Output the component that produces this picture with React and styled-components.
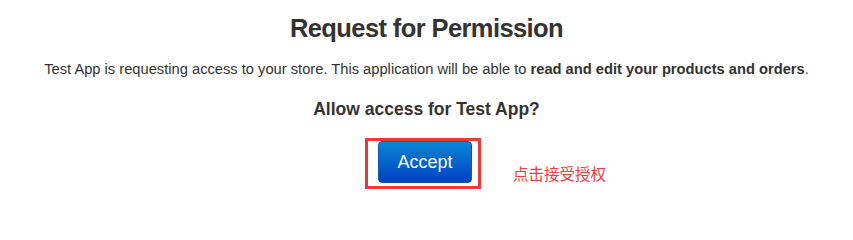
import styled, { createGlobalStyle } from 'styled-components';

const GlobalStyle = createGlobalStyle`
  html, body {
    margin: 0;
    padding: 0;
    background: #ffffff;
  }
  body {
    font-family: "Liberation Sans", Arial, sans-serif;
    color: #333333;
  }
`;

const Page = styled.div`
  display: flex;
  flex-direction: column;
  align-items: center;
  padding-top: 13px;
  text-align: center;
`;

const Title = styled.h1`
  margin: 0;
  font-size: 25.5px;
  line-height: 30px;
  letter-spacing: -0.6px;
  font-weight: bold;
  color: #333333;
`;

const Description = styled.p`
  margin: 16px 0 0;
  font-size: 14.7px;
  line-height: 20px;
  color: #333333;

  strong {
    font-weight: bold;
  }
`;

const Question = styled.h2`
  margin: 19px 0 0;
  font-size: 17.5px;
  line-height: 22px;
  font-weight: bold;
  color: #333333;
`;

// red highlight box drawn round the button (annotation)
const Highlight = styled.div`
  position: relative;
  display: flex;
  margin: 18px 7px 0 0;
  padding: 0 6px 3px 10px;
  border: 3px solid #ee3838;
`;

const AcceptButton = styled.button`
  width: 94px;
  height: 42px;
  padding: 0;
  border: 1px solid #0a57b4;
  border-radius: 4px;
  background: linear-gradient(#0b86d6, #0142c2);
  color: #ffffff;
  font-family: "Liberation Sans", Arial, sans-serif;
  font-size: 18px;
  cursor: pointer;
`;

const Note = styled.span`
  position: absolute;
  left: calc(100% + 35px);
  top: 22px;
  white-space: nowrap;
  font-family: "Noto Sans CJK SC", sans-serif;
  font-size: 15.5px;
  line-height: 20px;
  color: #f03c3c;
`;

export default function App() {
  return (
    <>
      <GlobalStyle />
      <Page>
        <Title>Request for Permission</Title>
        <Description>
          Test App is requesting access to your store. This application will be
          able to <strong>read and edit your products and orders</strong>.
        </Description>
        <Question>Allow access for Test App?</Question>
        <Highlight>
          <AcceptButton type="button">Accept</AcceptButton>
          <Note>点击接受授权</Note>
        </Highlight>
      </Page>
    </>
  );
}
